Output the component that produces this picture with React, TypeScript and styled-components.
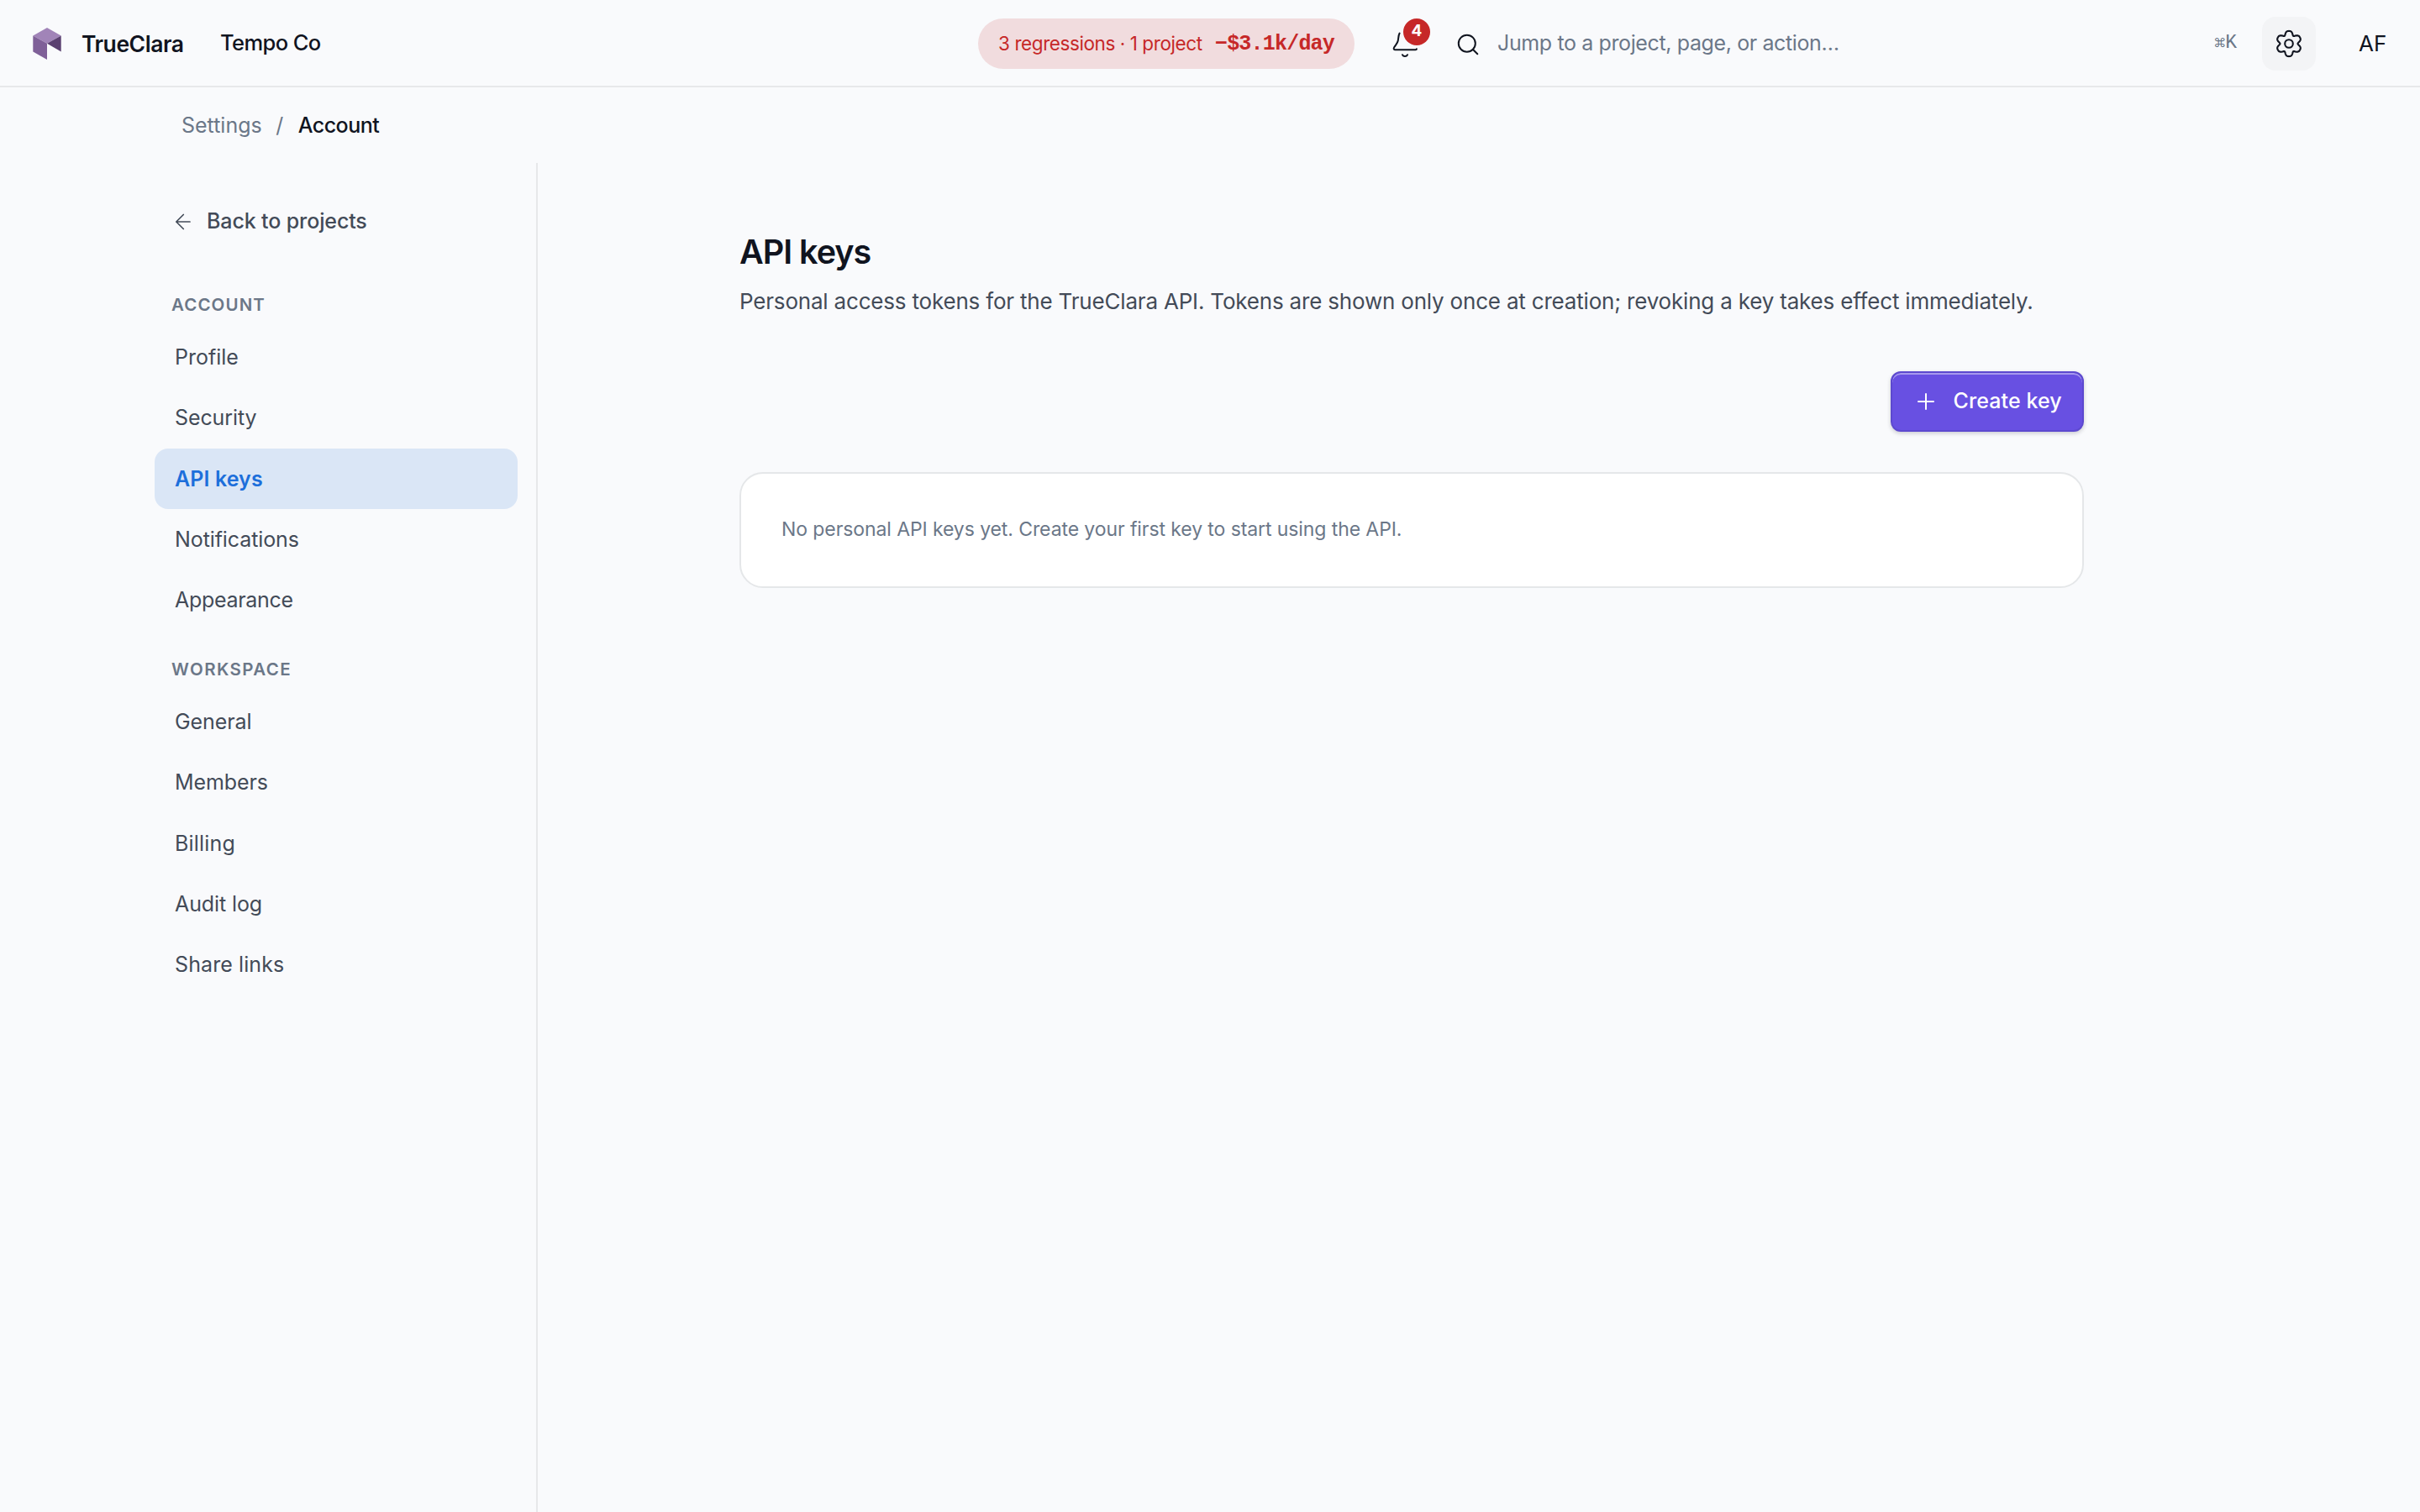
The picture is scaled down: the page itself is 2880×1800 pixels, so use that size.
import React from "react";
import styled, { createGlobalStyle } from "styled-components";

const GlobalStyle = createGlobalStyle`
  *, *::before, *::after { box-sizing: border-box; }
  body {
    margin: 0;
    background: #f9fafc;
    color: #10141f;
    font-family: Inter, "Liberation Sans", sans-serif;
    -webkit-font-smoothing: antialiased;
  }
`;

type TextProps = {
  $size: number;
  $track?: number;
  $weight?: number;
  $color?: string;
  $shift?: number;
};

const Label = styled.span<TextProps>`
  font-size: ${(p) => p.$size}px;
  letter-spacing: ${(p) => p.$track ?? 0}px;
  font-weight: ${(p) => p.$weight ?? 400};
  color: ${(p) => p.$color ?? "inherit"};
  margin-top: ${(p) => p.$shift ?? 0}px;
  line-height: 40px;
  white-space: nowrap;
`;

const Page = styled.div`
  display: flex;
  flex-direction: column;
  height: 1800px;
  overflow: hidden;
`;

const TopBar = styled.header`
  display: flex;
  align-items: center;
  height: 104px;
  flex: none;
  padding: 2px 40px 0 38px;
  border-bottom: 2px solid #e7e8ea;
`;

const Brand = styled.div`
  display: flex;
  align-items: center;
  width: 224px;
  gap: 23px;
`;

const Workspace = styled.div`
  flex: 1;
  display: flex;
  padding-bottom: 2px;
`;

const AlertPill = styled.div`
  display: flex;
  align-items: center;
  justify-content: space-between;
  width: 448px;
  height: 60px;
  padding: 0 24px;
  border-radius: 30px;
  background: #f1dcde;
  color: #c62828;
`;

const Amount = styled.span`
  font-family: "Liberation Mono", monospace;
  font-weight: 700;
  font-size: 25px;
  letter-spacing: -0.8px;
  white-space: nowrap;
`;

const BellButton = styled.div`
  position: relative;
  display: flex;
  margin-left: 43px;
  width: 34px;
`;

const Badge = styled.span`
  position: absolute;
  left: 15px;
  top: -13px;
  width: 32px;
  height: 32px;
  border-radius: 50%;
  background: #c62828;
  color: #fff;
  font-size: 19px;
  font-weight: 700;
  line-height: 30px;
  text-align: center;
`;

const SearchBox = styled.div`
  display: flex;
  align-items: center;
  margin-left: 43px;
  width: 930px;
  gap: 22px;
`;

const Shortcut = styled.span`
  display: flex;
  align-items: center;
  margin-left: auto;
  padding-bottom: 3px;
  color: #6b7788;
`;

const ShortcutKey = styled.span`
  font-family: "Liberation Mono", monospace;
  font-size: 23px;
  line-height: 40px;
  margin-left: -1px;
`;

const SettingsButton = styled.div`
  display: flex;
  align-items: center;
  justify-content: center;
  width: 64px;
  height: 64px;
  margin-left: 30px;
  border-radius: 16px;
  background: #f3f4f6;
`;

const Avatar = styled.div`
  display: flex;
  margin-left: 51px;
  width: 33px;
`;

const Crumbs = styled.nav`
  display: flex;
  align-items: center;
  height: 90px;
  flex: none;
  padding-left: 216px;
`;

const Slash = styled.span`
  display: flex;
  justify-content: center;
  width: 43px;
  padding-right: 1px;
`;

const Body = styled.div`
  display: flex;
  flex: 1;
`;

const Sidebar = styled.aside`
  display: flex;
  flex-direction: column;
  width: 640px;
  padding: 46px 22px 0 184px;
  border-right: 2px solid #e7e8ea;
`;

const BackLink = styled.a`
  display: flex;
  align-items: center;
  gap: 15px;
  height: 46px;
  padding-left: 20px;
  color: #434b58;
`;

const Group = styled.section<{ $top: number }>`
  display: flex;
  flex-direction: column;
  padding-top: ${(p) => p.$top}px;
`;

const GroupTitle = styled.h2`
  display: flex;
  align-items: center;
  height: 30px;
  margin: 0 0 11px;
  padding-left: 20px;
`;

const NavItem = styled.a<{ $active?: boolean }>`
  display: flex;
  align-items: center;
  height: 72.25px;
  padding-left: 24px;
  border-radius: 16px;
  background: ${(p) => (p.$active ? "#dae6f6" : "transparent")};
  color: ${(p) => (p.$active ? "#1d6fdb" : "#434b58")};
`;

const Main = styled.main`
  display: flex;
  flex-direction: column;
  width: 1600px;
  margin-left: 240px;
  padding-top: 82px;
`;

const Heading = styled.h1`
  display: flex;
  align-items: center;
  height: 48px;
  margin: 0;
`;

const Description = styled.p`
  display: flex;
  align-items: center;
  height: 44px;
  margin: 13px 0 0;
`;

const Actions = styled.div`
  display: flex;
  justify-content: flex-end;
  margin-top: 61px;
`;

const PrimaryButton = styled.button`
  display: flex;
  align-items: center;
  width: 230px;
  height: 72px;
  padding: 0 0 0 29px;
  gap: 21.5px;
  border: 2px solid #5d49cf;
  border-radius: 12px;
  background: #6850e2;
  color: #fff;
  font-family: inherit;
  box-shadow: inset 0 2px 0 rgba(255, 255, 255, 0.42), 0 2px 5px rgba(20, 20, 40, 0.2);
`;

const EmptyCard = styled.div`
  display: flex;
  align-items: center;
  height: 138px;
  margin-top: 48px;
  padding-left: 48px;
  border: 2px solid #e5e7e9;
  border-radius: 28px;
  background: #fff;
`;

const Stroke = styled.svg<{ $w: number }>`
  display: block;
  flex: none;
  fill: none;
  stroke: currentColor;
  stroke-width: ${(p) => p.$w};
  stroke-linecap: round;
  stroke-linejoin: round;
  overflow: visible;
`;

const LogoMark = () => (
  <svg width="36" height="40" viewBox="0 0 36 40">
    <path d="M18 1 34.7 10.6 18 19.8 1.3 10.6Z" fill="#a184b8" />
    <path d="M1.3 10.6 18 19.8V38.9L1.3 29.6Z" fill="#7f6098" />
    <path d="M34.7 10.6V29.6L18 19.8Z" fill="#5a4070" />
  </svg>
);

// Six soft lobes around the hub, one of them pointing straight up.
const gearOutline =
  Array.from({ length: 120 }, (_, i) => {
    const a = (i / 120) * Math.PI * 2;
    const r = 13.3 + 2.3 * Math.cos(6 * a) - 0.5 * Math.cos(12 * a);
    const x = 18 + r * Math.sin(a);
    const y = 18 - r * Math.cos(a);
    return `${i ? "L" : "M"}${x.toFixed(2)} ${y.toFixed(2)}`;
  }).join("") + "Z";

type Item = { name: string; track: number; active?: boolean };

const accountItems: Item[] = [
  { name: "Profile", track: 0 },
  { name: "Security", track: -0.1 },
  { name: "API keys", track: 0.1, active: true },
  { name: "Notifications", track: -0.1 },
  { name: "Appearance", track: -0.3 },
];

const workspaceItems: Item[] = [
  { name: "General", track: -0.1 },
  { name: "Members", track: -0.1 },
  { name: "Billing", track: 0.2 },
  { name: "Audit log", track: -0.1 },
  { name: "Share links", track: 0.1 },
];

type GroupProps = { title: string; track: number; items: Item[]; top: number };

const NavGroup = ({ title, track, items, top }: GroupProps) => (
  <Group $top={top}>
    <GroupTitle>
      <Label $size={20.5} $weight={600} $track={track} $color="#6b7788">{title}</Label>
    </GroupTitle>
    {items.map((item) => (
      <NavItem key={item.name} $active={item.active}>
        <Label $size={25} $track={item.track} $weight={item.active ? 600 : 400}>{item.name}</Label>
      </NavItem>
    ))}
  </Group>
);

export default function App() {
  return (
    <Page>
      <GlobalStyle />
      <TopBar>
        <Brand>
          <LogoMark />
          <Label $size={26.5} $weight={600} $track={-0.45}>TrueClara</Label>
        </Brand>
        <Workspace>
          <Label $size={25.5} $weight={500} $track={-0.6}>Tempo Co</Label>
        </Workspace>
        <AlertPill>
          <Label $size={22.5} $track={-0.42}>3 regressions · 1 project</Label>
          <Amount>−$3.1k/day</Amount>
        </AlertPill>
        <BellButton>
          <Stroke $w={2} width="34" height="34" viewBox="0 0 34 34">
            <path d="M10.6 4.500C9.200 7 9.300 10.500 8.700 13.500C8.100 17 5.600 18.500 4 21.600C3.200 23.200 3.900 24.300 5.500 24.300H29.500C30.300 24.300 30.900 23.900 30.900 23.200M14 30.200C15.200 32.600 18.800 32.600 20 30.200" />
          </Stroke>
          <Badge>4</Badge>
        </BellButton>
        <SearchBox>
          <Stroke $w={2} width="28" height="28" viewBox="0 0 28 28">
            <circle cx="13.8" cy="13.7" r="10" />
            <path d="m21 21 5.300 5.300" />
          </Stroke>
          <Label $size={25} $track={-0.38} $shift={-2} $color="#6b7788">Jump to a project, page, or action…</Label>
          <Shortcut>
            <Label $size={15}>⌘</Label>
            <ShortcutKey>K</ShortcutKey>
          </Shortcut>
        </SearchBox>
        <SettingsButton>
          <Stroke $w={2.1} width="36" height="36" viewBox="0 0 36 36">
            <path d={gearOutline} />
            <circle cx="18" cy="18" r="4.8" />
          </Stroke>
        </SettingsButton>
        <Avatar>
          <Label $size={26}>AF</Label>
        </Avatar>
      </TopBar>
      <Crumbs>
        <Label $size={25} $color="#6b7788">Settings</Label>
        <Slash><Label $size={25} $color="#6b7788">/</Label></Slash>
        <Label $size={25} $weight={500} $track={-0.5}>Account</Label>
      </Crumbs>
      <Body>
        <Sidebar>
          <BackLink>
            <Stroke $w={1.7} width="27" height="27" viewBox="0 0 27 27">
              <path d="M22 14H5.800M14.300 5.500 5.800 14l8.500 8.500" />
            </Stroke>
            <Label $size={25} $weight={500} $track={-0.12}>Back to projects</Label>
          </BackLink>
          <NavGroup title="ACCOUNT" track={1.1} items={accountItems} top={62} />
          <NavGroup title="WORKSPACE" track={1.4} items={workspaceItems} top={31.75} />
        </Sidebar>
        <Main>
          <Heading>
            <Label $size={39.5} $weight={600} $track={-1}>API keys</Label>
          </Heading>
          <Description>
            <Label $size={26} $track={-0.19} $color="#434b58">
              Personal access tokens for the TrueClara API. Tokens are shown only once at creation; revoking a key takes effect immediately.
            </Label>
          </Description>
          <Actions>
            <PrimaryButton>
              <Stroke $w={2} width="22" height="22" viewBox="0 0 22 22">
                <path d="M11 2v18M2 11h18" />
              </Stroke>
              <Label $size={25} $weight={500} $track={0.1} $shift={-2}>Create key</Label>
            </PrimaryButton>
          </Actions>
          <EmptyCard>
            <Label $size={23} $track={-0.09} $shift={-3} $color="#6b7788">
              No personal API keys yet. Create your first key to start using the API.
            </Label>
          </EmptyCard>
        </Main>
      </Body>
    </Page>
  );
}
